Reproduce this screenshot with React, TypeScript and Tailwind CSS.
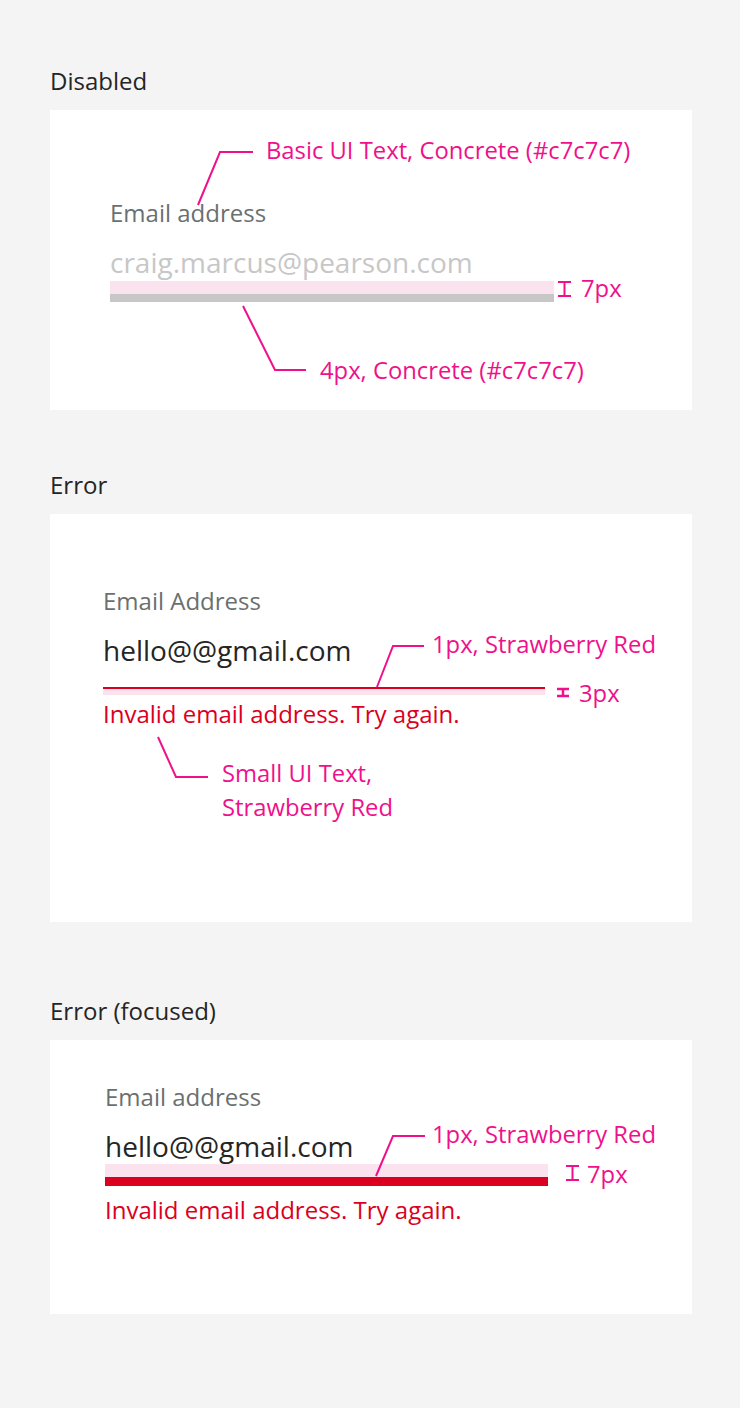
const PINK = '#f0108b';

function Note({ left, top, children }: { left: number; top: number; children: React.ReactNode }) {
  return (
    <span
      className="absolute whitespace-nowrap text-[23.8px] leading-[30px] text-[#f0108b]"
      style={{ left, top: top - 15 }}
    >
      {children}
    </span>
  );
}

function Leader({ points }: { points: string }) {
  return <polyline points={points} fill="none" stroke={PINK} strokeWidth={2} />;
}

function IBeam({ x, y, h }: { x: number; y: number; h: number }) {
  return (
    <g stroke={PINK} strokeWidth={2}>
      <line x1={x} y1={y} x2={x + 13} y2={y} />
      <line x1={x + 6.5} y1={y} x2={x + 6.5} y2={y + h} />
      <line x1={x} y1={y + h} x2={x + 13} y2={y + h} />
    </g>
  );
}

export default function App() {
  return (
    <div
      className="flex min-h-[1408px] flex-col bg-[#f4f4f4] pl-[50px] pr-[48px] pt-[66px]"
      style={{ fontFamily: '"Open Sans", "Noto Sans", sans-serif' }}
    >
      {/* Disabled */}
      <h2 className="text-[24px] leading-[30px] text-[#252525]">Disabled</h2>
      <div className="relative mt-[14px] flex h-[300px] flex-col items-start bg-white pl-[60px] pt-[88px]">
        <div className="text-[24px] leading-[30px] text-[#6a7070]">Email address</div>
        <div className="mt-[16px] text-[28px] leading-[36px] text-[#c7c7c7]">craig.marcus@pearson.com</div>
        <div className="mt-[1px] flex w-[444px] flex-col">
          <div className="h-[13px] bg-[#fae3ef]" />
          <div className="h-[8px] bg-[#c7c7c7]" />
        </div>

        <svg className="absolute inset-0 h-full w-full" viewBox="0 0 642 300">
          <Leader points="148,95 170,42 203,42" />
          <Leader points="193,196 225,260 256,260" />
          <IBeam x={508} y={172} h={14} />
        </svg>
        <Note left={216} top={40}>Basic UI Text, Concrete (#c7c7c7)</Note>
        <Note left={270} top={260}>4px, Concrete (#c7c7c7)</Note>
        <Note left={531} top={178}>7px</Note>
      </div>

      {/* Error */}
      <h2 className="mt-[60px] text-[24px] leading-[30px] text-[#252525]">Error</h2>
      <div className="relative mt-[14px] flex h-[408px] flex-col items-start bg-white pl-[53px] pt-[72px]">
        <div className="text-[24px] leading-[30px] text-[#6a7070]">Email Address</div>
        <div className="mt-[16px] text-[28px] leading-[36px] text-[#252525]">hello@@gmail.com</div>
        <div className="mt-[19px] flex w-[442px] flex-col">
          <div className="h-[2px] bg-[#db0020]" />
          <div className="h-[6px] bg-[#fae3ef]" />
        </div>
        <div className="mt-[4px] text-[24px] leading-[30px] text-[#db0020]">Invalid email address. Try again.</div>

        <svg className="absolute inset-0 h-full w-full" viewBox="0 0 642 408">
          <Leader points="327,173 343,132 374,132" />
          <Leader points="108,223 126,263 158,263" />
          <g stroke={PINK} strokeWidth={2.5}>
            <line x1={507} y1={175} x2={519} y2={175} />
            <line x1={513} y1={175} x2={513} y2={182} />
            <line x1={507} y1={182} x2={519} y2={182} />
          </g>
        </svg>
        <Note left={382} top={130}>1px, Strawberry Red</Note>
        <Note left={529} top={179}>3px</Note>
        <Note left={172} top={259}>Small UI Text,</Note>
        <Note left={172} top={293}>Strawberry Red</Note>
      </div>

      {/* Error (focused) */}
      <h2 className="mt-[74px] text-[24px] leading-[30px] text-[#252525]">Error (focused)</h2>
      <div className="relative mt-[14px] flex h-[274px] flex-col items-start bg-white pl-[55px] pt-[42px]">
        <div className="text-[24px] leading-[30px] text-[#6a7070]">Email address</div>
        <div className="mt-[16px] text-[28px] leading-[36px] text-[#252525]">hello@@gmail.com</div>
        <div className="flex w-[443px] flex-col">
          <div className="h-[13px] bg-[#fae3ef]" />
          <div className="h-[9px] bg-[#db0020]" />
        </div>
        <div className="mt-[9px] text-[24px] leading-[30px] text-[#db0020]">Invalid email address. Try again.</div>

        <svg className="absolute inset-0 h-full w-full" viewBox="0 0 642 274">
          <Leader points="326,136 343,96 375,96" />
          <IBeam x={516} y={126} h={14} />
        </svg>
        <Note left={382} top={94}>1px, Strawberry Red</Note>
        <Note left={537} top={134}>7px</Note>
      </div>
    </div>
  );
}
